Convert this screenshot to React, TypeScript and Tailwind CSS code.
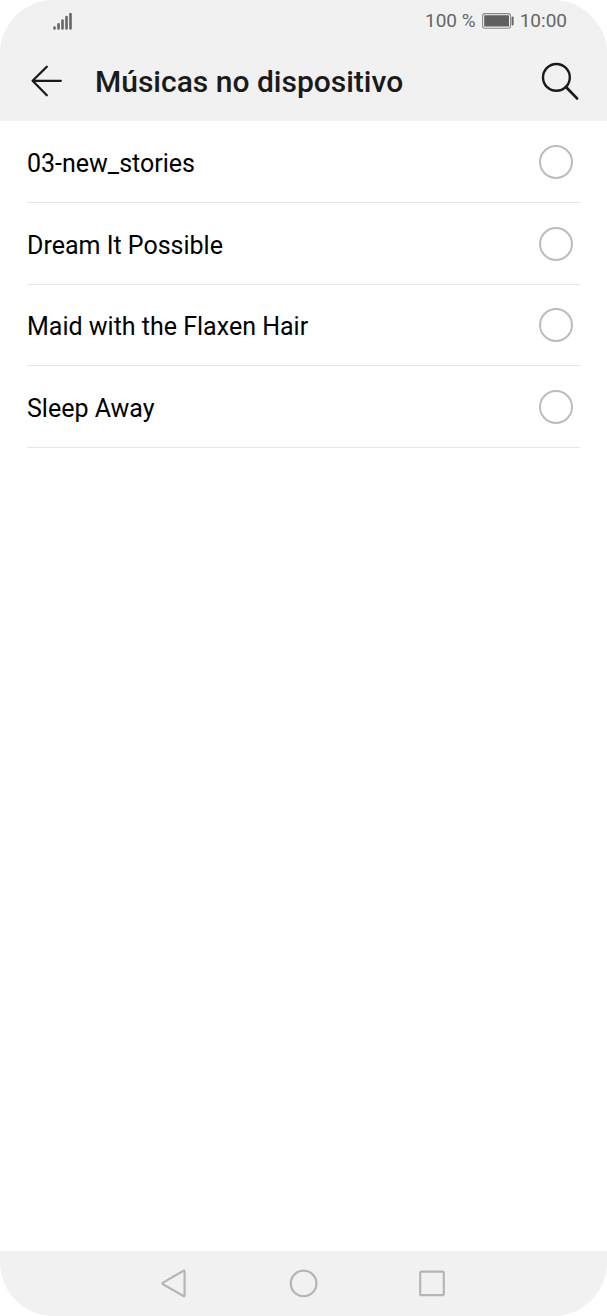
import { useState } from "react";

const songs = [
  { id: "new-stories", title: "03-new_stories" },
  { id: "dream", title: "Dream It Possible" },
  { id: "maid", title: "Maid with the Flaxen Hair" },
  { id: "sleep", title: "Sleep Away" },
];

function StatusBar() {
  return (
    <div className="flex h-[41px] items-center justify-between pr-10 pl-[53px] text-[19px] leading-6 text-[#666666]">
      <svg className="h-5 w-5" viewBox="0 0 20 20" fill="none" aria-hidden="true">
        <path
          d="M1.5 16.6v.8M5.5 13.2v4.200M9.5 9.6v7.8M13.5 6v11.4M17.5 3v14.4"
          stroke="currentColor"
          strokeWidth="2.6"
          strokeLinecap="round"
        />
      </svg>
      <div className="flex items-center gap-[6px]">
        <span>100 %</span>
        <svg className="h-4 w-8" viewBox="0 0 32 16" fill="none" aria-hidden="true">
          <rect x="0.6" y="0.6" width="28" height="14.6" rx="2.4" stroke="#8a8a8a" strokeWidth="1.1" />
          <rect x="2.2" y="2.2" width="24.8" height="11.4" rx="0.6" fill="#606060" />
          <rect x="29.6" y="3.4" width="2" height="9" rx="1" fill="#666666" />
        </svg>
        <span>10:00</span>
      </div>
    </div>
  );
}

function Header() {
  return (
    <header className="bg-[#f1f1f1]">
      <StatusBar />
      <div className="flex h-20 items-center gap-7 px-[27px] text-[#1a1a1a]">
        <button type="button" aria-label="Voltar">
          <svg className="size-10" viewBox="0 0 40 40" fill="none" aria-hidden="true">
            <path
              d="M33.8 19.8H5.6M19.8 5.8 5.6 19.8l14.2 14.4"
              stroke="currentColor"
              strokeWidth="2.3"
              strokeLinecap="round"
              strokeLinejoin="round"
            />
          </svg>
        </button>
        <h1 className="flex-1 pt-[2px] text-[30px] leading-10 font-medium">Músicas no dispositivo</h1>
        <button type="button" aria-label="Pesquisar">
          <svg className="size-10" viewBox="0 0 40 40" fill="none" aria-hidden="true">
            <circle cx="16.4" cy="16.4" r="13.4" stroke="currentColor" strokeWidth="2.4" />
            <path d="m26 26 11 11.4" stroke="currentColor" strokeWidth="2.8" strokeLinecap="round" />
          </svg>
        </button>
      </div>
    </header>
  );
}

function NavBar() {
  return (
    <nav
      className="flex h-[65px] items-center justify-center gap-[99px] bg-[#f1f1f1] text-[#b5b5b5]"
      aria-label="Sistema"
    >
      <button type="button" aria-label="Voltar">
        <svg className="size-[30px]" viewBox="0 0 30 30" fill="none" aria-hidden="true">
          <path
            d="M24.6 2.4v24c0 .8-.6 1-1.2.6L3 15.2c-.6-.4-.6-1.200 0-1.600L23.400 1.800c.6-.4 1.200-.2 1.200.6Z"
            stroke="currentColor"
            strokeWidth="2.2"
            strokeLinejoin="round"
          />
        </svg>
      </button>
      <button type="button" aria-label="Início">
        <svg className="size-[30px]" viewBox="0 0 30 30" fill="none" aria-hidden="true">
          <circle cx="14.6" cy="14.4" r="12.8" stroke="currentColor" strokeWidth="2.2" />
        </svg>
      </button>
      <button type="button" aria-label="Recentes">
        <svg className="size-[30px]" viewBox="0 0 30 30" fill="none" aria-hidden="true">
          <rect x="2.2" y="2.6" width="23.6" height="23.6" rx="1.2" stroke="currentColor" strokeWidth="2.2" />
        </svg>
      </button>
    </nav>
  );
}

export default function App() {
  const [selected, setSelected] = useState("");

  return (
    <div className="min-h-screen bg-white">
      <div className="flex min-h-screen flex-col overflow-hidden rounded-[54px] bg-white font-['Roboto',sans-serif]">
        <Header />
        <main className="flex-1 px-[27px]">
          <ul className="grid min-h-[327px] auto-rows-fr">
            {songs.map((song) => (
              <li key={song.id} className="border-b border-[#e6e6e6]">
                <label
                  htmlFor={song.id}
                  className="flex h-full items-center justify-between pt-px pr-[7px] text-[25px] leading-8 text-black"
                >
                  <span className="pt-1">{song.title}</span>
                  <input
                    id={song.id}
                    type="radio"
                    name="song"
                    checked={selected === song.id}
                    onChange={() => setSelected(song.id)}
                    className="size-[34px] appearance-none rounded-full border-2 border-[#bcbcbc] checked:border-[10px] checked:border-[#007dff]"
                  />
                </label>
              </li>
            ))}
          </ul>
        </main>
        <NavBar />
      </div>
    </div>
  );
}
